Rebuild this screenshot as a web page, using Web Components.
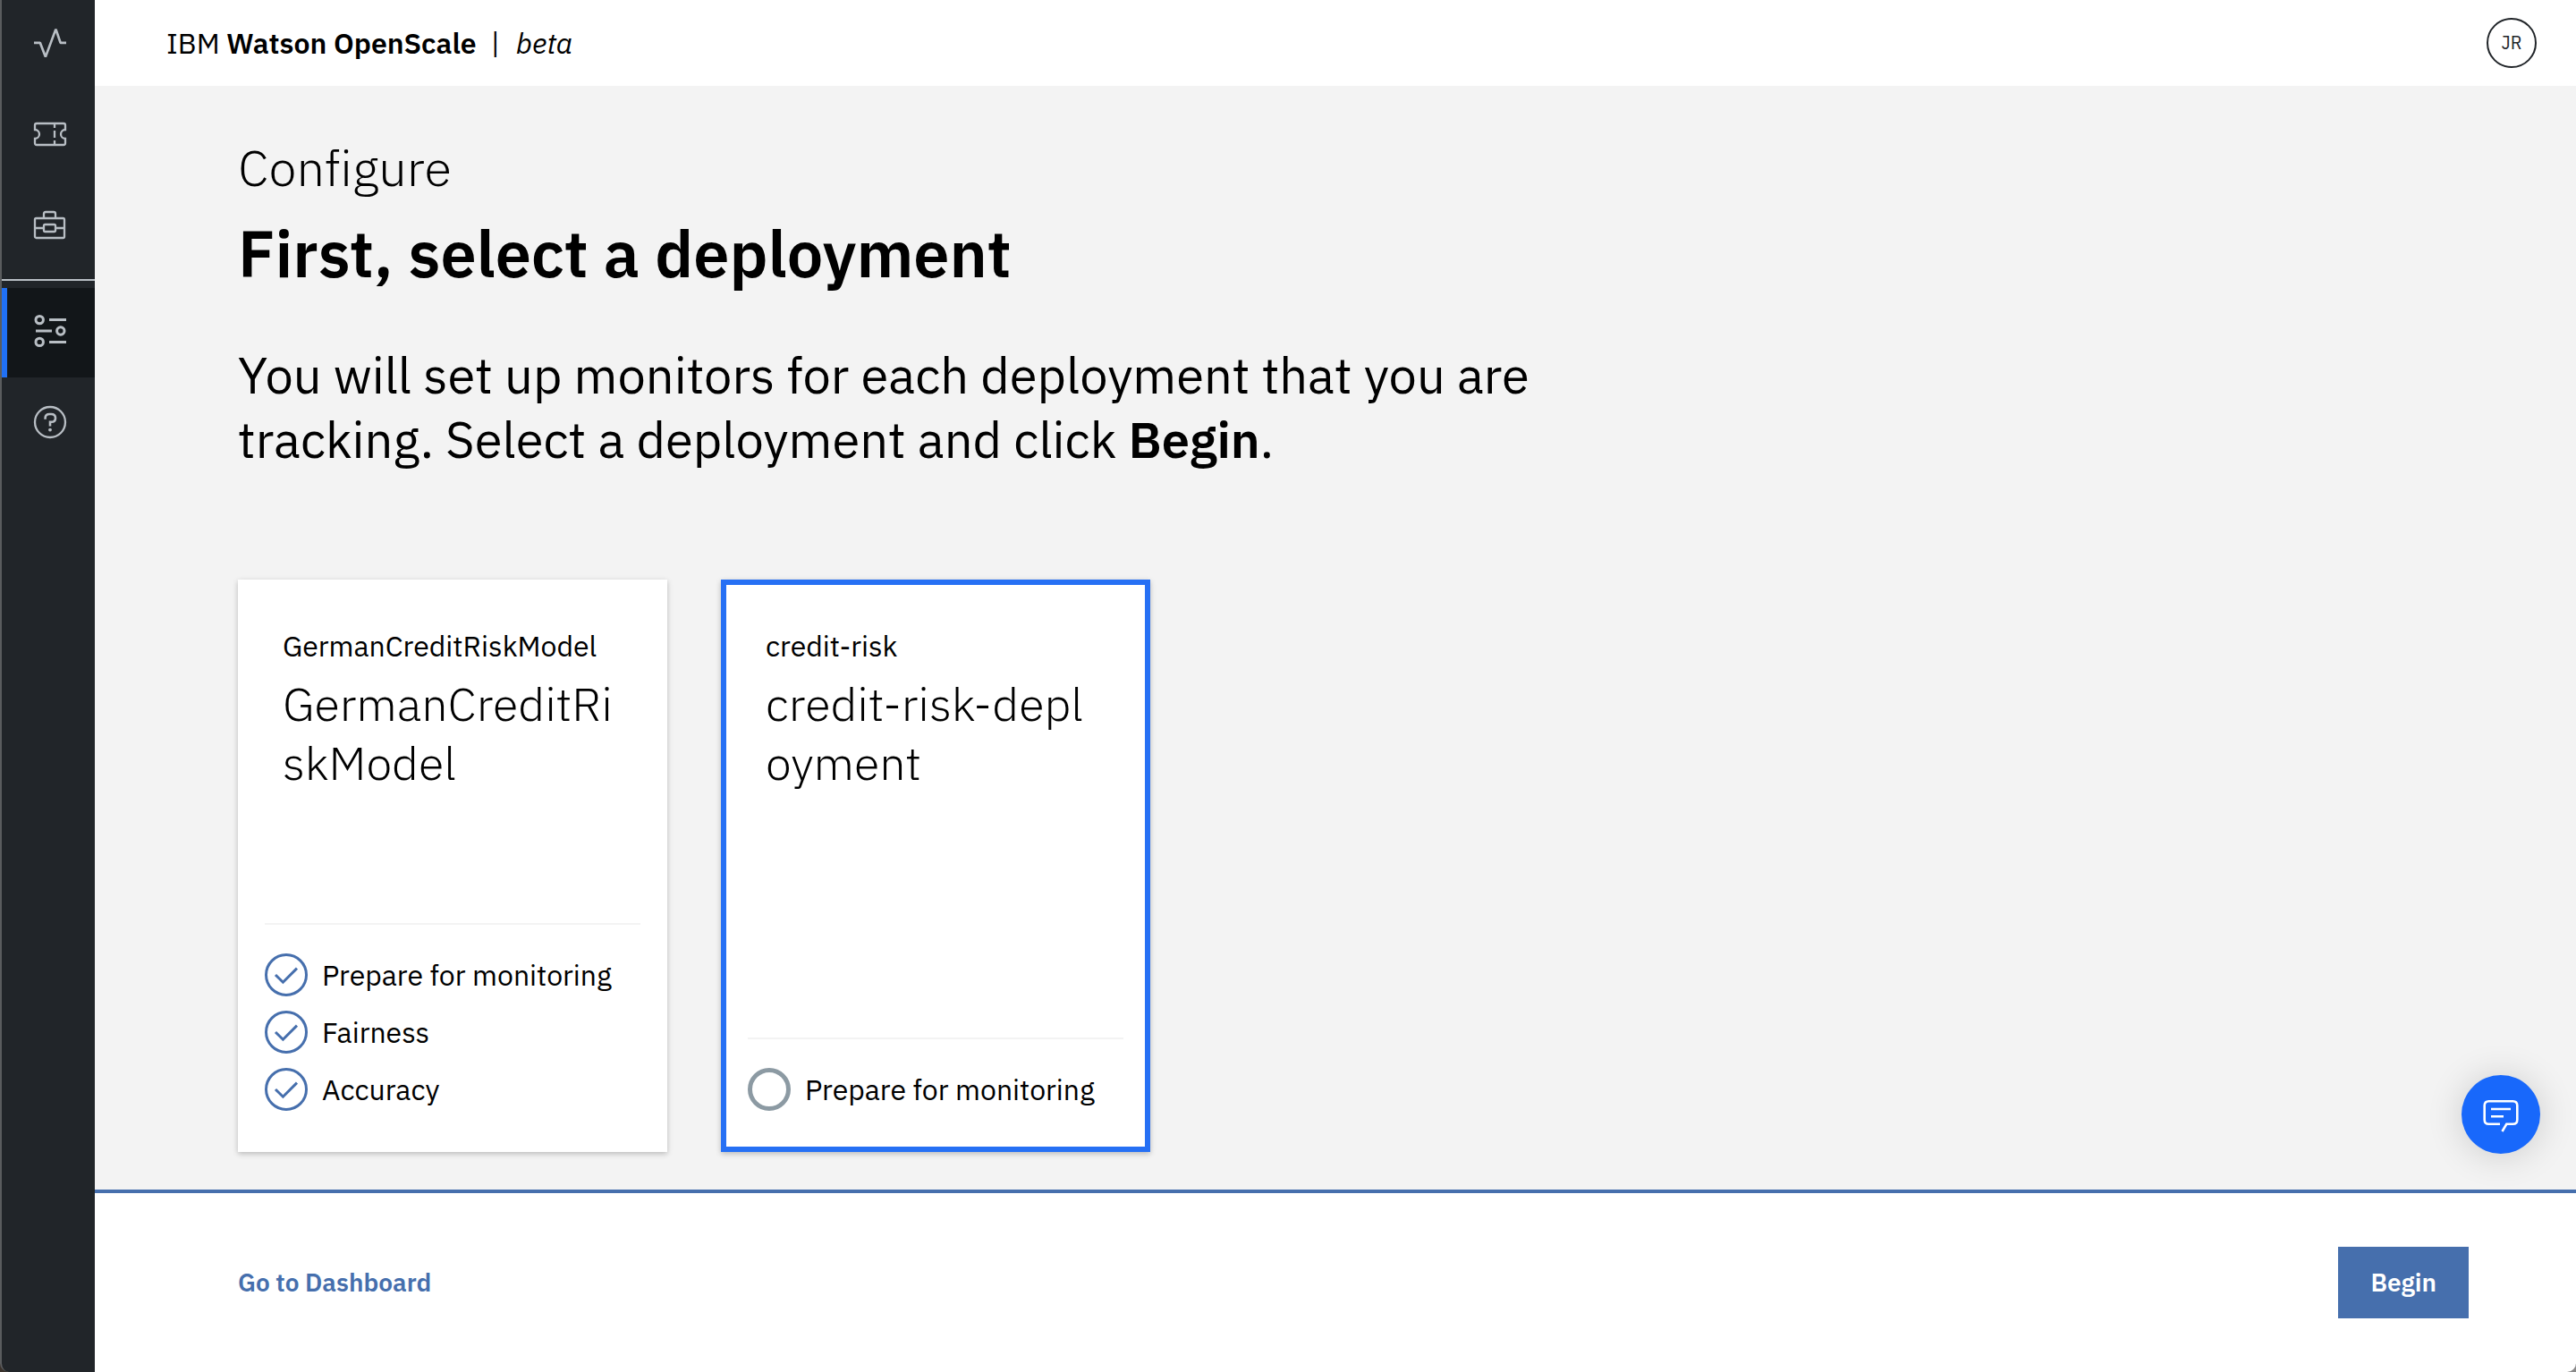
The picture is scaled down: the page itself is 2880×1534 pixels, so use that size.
<!DOCTYPE html>
<html lang="en">
<head>
<meta charset="utf-8">
<title>IBM Watson OpenScale</title>
<style>
  html { height: 100%; }
  body {
    margin: 0;
    min-height: 100%;
    display: flex;
    background: linear-gradient(to right, #3a322c 50%, #8a8a8a 50%);
    color: #000;
    font-family: "IBM Plex Sans", Roboto, sans-serif;
    font-size: 32px;
    font-variant-ligatures: none;
  }
</style>
</head>
<body>
<app-shell>
  <side-nav slot="nav"></side-nav>
  <app-header slot="header" initials="JR"></app-header>
  <page-intro>
    <span slot="eyebrow">Configure</span>
    <span slot="title">First, select a deployment</span>
    You will set up monitors for each deployment that you are tracking. Select a deployment and click <b>Begin</b>.
  </page-intro>
  <card-row>
    <deployment-card model="GermanCreditRiskModel" name="GermanCreditRiskModel">
      <status-item done>Prepare for monitoring</status-item>
      <status-item done>Fairness</status-item>
      <status-item done>Accuracy</status-item>
    </deployment-card>
    <deployment-card model="credit-risk" name="credit-risk-deployment" selected>
      <status-item>Prepare for monitoring</status-item>
    </deployment-card>
  </card-row>
  <chat-button slot="overlay"></chat-button>
  <action-bar slot="footer">
    <span slot="link">Go to Dashboard</span>
    <span slot="action">Begin</span>
  </action-bar>
</app-shell>
<script>
  const define = (name, markup, setup) => customElements.define(name, class extends HTMLElement {
    constructor() {
      super();
      const template = document.createElement('template');
      template.innerHTML = `<style>:host, * { box-sizing: border-box; }</style>${markup}`;
      this.attachShadow({ mode: 'open' }).append(template.content.cloneNode(true));
    }
    connectedCallback() { if (setup) setup(this, this.shadowRoot); }
  });

  define('app-shell', `
    <style>
      :host { display: flex; flex: 1; min-height: 100vh; }
      .column { flex: 1; min-width: 0; display: flex; flex-direction: column; background: #fff; border-bottom-right-radius: 10px; }
      main { flex: 1; position: relative; background: #f3f3f3; padding: 55px 160px 42px; }
    </style>
    <slot name="nav"></slot>
    <div class="column">
      <slot name="header"></slot>
      <main><slot></slot><slot name="overlay"></slot></main>
      <slot name="footer"></slot>
    </div>`);

  define('side-nav', `
    <style>
      :host { display: block; flex: none; width: 106px; background: #212529; border-left: 2px solid #5a5c5e; border-bottom-left-radius: 10px; color: #b8bec4; }
      .group { display: flex; flex-direction: column; gap: 6px; padding-bottom: 12px; border-bottom: 2px solid #b8bec4; margin-bottom: 8px; }
      a { display: flex; align-items: center; height: 100px; padding-left: 30px; border-left: 6px solid transparent; color: inherit; }
      .group a { height: 96px; }
      a[aria-current] { background: #121619; border-left-color: #2070f4; }
      svg { width: 36px; height: 36px; overflow: visible; fill: none; stroke: currentColor; stroke-width: 2.3; }
    </style>
    <nav aria-label="Main">
      <div class="group">
        <a href="#insights" aria-label="Insights"><svg viewBox="0 0 36 36"><path stroke-linejoin="bevel" stroke-width="2.7" d="M0 17.8H6.8L12.9 33.6 24.4 2.6 29.6 17.8H36"/></svg></a>
        <a href="#transactions" aria-label="Transactions"><svg viewBox="0 0 36 36"><path d="M3 6H33Q35 6 35 8V13A5 5 0 0 0 35 23V28Q35 30 33 30H3Q1 30 1 28V23A5 5 0 0 0 1 13V8Q1 6 3 6Z"/><path d="M23 6V11M23 14V22M23 25V30"/></svg></a>
        <a href="#toolkit" aria-label="Toolkit"><svg viewBox="0 0 36 36"><rect x="1" y="10" width="33" height="22" rx="1.5"/><path d="M11 10V5Q11 3 13 3H22Q24 3 24 5V10M1 21H11M24 21H34"/><rect x="11" y="17" width="13" height="8" rx="1.5"/></svg></a>
      </div>
      <a href="#configure" aria-label="Configure" aria-current="page"><svg viewBox="0 2 36 36"><g stroke-width="3"><circle cx="6.2" cy="5.6" r="4.2"/><path d="M17 5.5H36M2 18H20M17 30.5H36"/><circle cx="29.8" cy="18" r="4.2"/><circle cx="6.2" cy="30.4" r="4.2"/></g></svg></a>
      <a href="#help" aria-label="Help"><svg viewBox="0 0 36 36"><circle cx="18" cy="18" r="17"/><path stroke-width="2.6" d="M12.6 14.8V13.6Q12.6 9 17.4 9H19.2Q24 9 24 13.4T19.4 17.8H18V22.6"/><circle cx="18" cy="26.6" r="1.9" fill="currentColor" stroke="none"/></svg></a>
    </nav>`);

  define('app-header', `
    <style>
      :host { display: block; }
      header { display: flex; align-items: center; justify-content: space-between; height: 96px; padding: 0 44px 0 80px; background: #fff; }
      b { font-weight: 600; }
      .bar { margin: 0 18px 0 16px; }
      button { width: 56px; height: 56px; padding: 0; border: 2px solid #212529; border-radius: 50%; background: #fff; color: #212529; font: 20px/24px "IBM Plex Sans", Roboto, sans-serif; }
    </style>
    <header>
      <div>IBM <b>Watson OpenScale</b><span class="bar">|</span><i>beta</i></div>
      <button type="button"></button>
    </header>`,
    (host, root) => { root.querySelector('button').textContent = host.getAttribute('initials'); });

  define('page-intro', `
    <style>
      :host { display: block; max-width: 1520px; margin-bottom: 121px; font-size: 56px; line-height: 72px; }
      .eyebrow { margin: 0 0 12px; font-weight: 300; }
      h1 { margin: 0 0 52px; font-size: 72px; font-weight: 600; line-height: 96px; }
      p { margin: 0; }
      ::slotted(b) { font-weight: 600; }
    </style>
    <div class="eyebrow"><slot name="eyebrow"></slot></div>
    <h1><slot name="title"></slot></h1>
    <p><slot></slot></p>`);

  define('card-row', `
    <style>:host { display: flex; flex-wrap: wrap; gap: 60px; }</style>
    <slot></slot>`);

  define('deployment-card', `
    <style>
      :host { display: flex; width: 480px; min-height: 640px; }
      button { flex: 1; display: flex; flex-direction: column; align-items: stretch; margin: 0; padding: 48px 24px 40px; border: 6px solid #fff; border-radius: 0; background: #fff; box-shadow: 0 2px 6px rgba(0, 0, 0, .24); color: #000; text-align: left; font: inherit; }
      :host([selected]) button { border-color: #2670f4; }
      .model { padding: 0 20px; line-height: 40px; }
      .name { padding: 0 20px; margin-top: 12px; font-size: 52px; font-weight: 300; line-height: 66px; word-break: break-all; }
      .statuses { display: flex; flex-direction: column; gap: 16px; margin-top: auto; padding-top: 32px; border-top: 2px solid #f3f3f3; }
    </style>
    <button type="button">
      <span class="model"></span>
      <span class="name"></span>
      <span class="statuses"><slot></slot></span>
    </button>`,
    (host, root) => {
      root.querySelector('.model').textContent = host.getAttribute('model');
      root.querySelector('.name').textContent = host.getAttribute('name');
      root.querySelector('button').setAttribute('aria-pressed', host.hasAttribute('selected'));
    });

  define('status-item', `
    <style>
      :host { display: flex; align-items: center; gap: 16px; line-height: 48px; }
      svg { flex: none; width: 48px; height: 48px; fill: none; stroke: #466fad; stroke-width: 3; }
      .pending { stroke: #8c9aa3; stroke-width: 5; }
      :host([done]) .pending, :host(:not([done])) .done { display: none; }
    </style>
    <svg class="done" viewBox="0 0 48 48"><circle cx="24" cy="24" r="22.5"/><path d="M12 24 20.4 32.2 36 16.6"/></svg>
    <svg class="pending" viewBox="0 0 48 48"><circle cx="24" cy="24" r="21.5"/></svg>
    <span><slot></slot></span>`);

  define('chat-button', `
    <style>
      :host { display: block; position: absolute; right: 40px; bottom: 40px; }
      button { display: flex; align-items: center; justify-content: center; width: 88px; height: 88px; padding: 0; border: 0; border-radius: 50%; background: #1868fb; box-shadow: 0 2px 40px rgba(0, 0, 0, .16); }
      svg { width: 40px; height: 40px; fill: none; stroke: #fff; stroke-width: 2.6; }
    </style>
    <button type="button" aria-label="Chat">
      <svg viewBox="0 0 40 40"><path d="M19 30.8H6.5Q1.7 30.8 1.7 26V10Q1.7 5.2 6.5 5.2H33.5Q38.3 5.2 38.3 10V26Q38.3 30.8 33.5 30.8H26.3L21.5 39M9 14H31M9 22.2H23"/></svg>
    </button>`);

  define('action-bar', `
    <style>
      :host { display: block; }
      footer { display: flex; align-items: center; justify-content: space-between; padding: 60px 120px 60px 160px; border-top: 4px solid #466fad; font-size: 28px; font-weight: 600; line-height: 40px; }
      a { color: #466fad; text-decoration: none; }
      button { padding: 20px 36px; border: 0; border-radius: 0; background: #466fad; color: #fff; font: inherit; }
    </style>
    <footer>
      <a href="#dashboard"><slot name="link"></slot></a>
      <button type="button"><slot name="action"></slot></button>
    </footer>`);
</script>
</body>
</html>
